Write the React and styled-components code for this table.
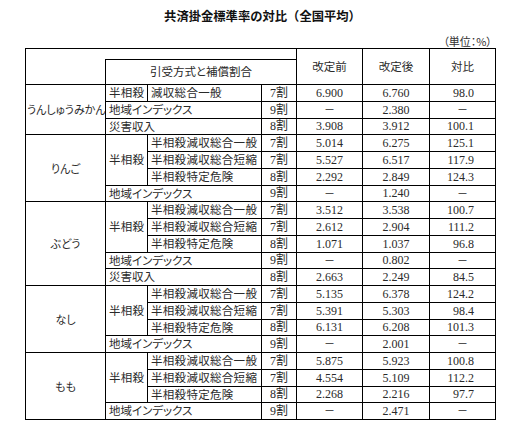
import React from "react";
import styled, { createGlobalStyle } from "styled-components";

const Global = createGlobalStyle`
  html, body { margin: 0; padding: 0; background: #fff; }
  body { width: 523px; height: 428px; overflow: hidden; }
`;

const JP = `"Noto Sans CJK JP", "Noto Sans", sans-serif`;
const NUM = `"Liberation Serif", "Noto Sans CJK JP", serif`;

const Page = styled.div`
  width: 523px;
  display: flex;
  flex-direction: column;
  align-items: center;
  padding-top: 6px;
  color: #1c1c1c;
`;

const Title = styled.h1`
  margin: 0;
  font-family: ${JP};
  font-size: 12.3px;
  font-weight: 700;
  line-height: 20px;
  height: 20px;
  padding-left: 2px;
  color: #111;
`;

const Unit = styled.div`
  align-self: stretch;
  margin-top: 8px;
  padding-right: 31px;
  text-align: right;
  font-family: ${JP};
  font-size: 11px;
  line-height: 14px;
  height: 14px;
  font-feature-settings: "palt";
  color: #333;
`;

const Table = styled.table`
  width: 470px;
  margin-left: 25px;
  align-self: flex-start;
  table-layout: fixed;
  border-collapse: collapse;
  border: 1px solid #000;
  font-family: ${JP};
  font-size: 11.5px;
  color: #2a2a2a;
  font-feature-settings: "palt";
`;

const HeadRow = styled.tr`
  height: ${(p) => p.$h}px;
`;

const Row = styled.tr`
  height: 16.75px;
`;

const Head = styled.th`
  font-weight: 400;
  padding: 0;
  line-height: 1;
  text-align: center;
  vertical-align: middle;
  border: 1px solid #000;
  ${(p) => p.$blank && `border-right: none; border-bottom: none;`}
  ${(p) => p.$topGap && `border-left: none; border-right: 1px solid #000;`}
`;

const Cell = styled.td`
  padding: 0 ${(p) => (p.$padR ? p.$padR : 3)}px 0 3px;
  line-height: 1;
  white-space: nowrap;
  overflow: hidden;
  vertical-align: middle;
  text-align: ${(p) => p.$align || "left"};
  border: 1px solid #000;
  font-family: ${(p) => (p.$num ? NUM : JP)};
  font-size: ${(p) => (p.$num ? "12px" : "11.5px")};
  letter-spacing: ${(p) => (p.$wide ? "0.3px" : "0")};
`;

const Label = styled(Cell)`
  text-align: center;
  padding: 0 1px;
  font-size: 11px;
`;

const Dash = styled.span`
  font-family: ${JP};
  font-size: 11px;
`;

const groups = [
  {
    name: "うんしゅうみかん",
    rows: [
      { kind: "inline", item: "減収総合一般", rate: "7割", a: "6.900", b: "6.760", c: "98.0" },
      { kind: "wide", item: "地域インデックス", rate: "9割", a: "—", b: "2.380", c: "—" },
      { kind: "wide", item: "災害収入", rate: "8割", a: "3.908", b: "3.912", c: "100.1" },
    ],
  },
  {
    name: "りんご",
    rows: [
      { kind: "sub", item: "半相殺減収総合一般", rate: "7割", a: "5.014", b: "6.275", c: "125.1" },
      { kind: "sub", item: "半相殺減収総合短縮", rate: "7割", a: "5.527", b: "6.517", c: "117.9" },
      { kind: "sub", item: "半相殺特定危険", rate: "8割", a: "2.292", b: "2.849", c: "124.3" },
      { kind: "wide", item: "地域インデックス", rate: "9割", a: "—", b: "1.240", c: "—" },
    ],
  },
  {
    name: "ぶどう",
    rows: [
      { kind: "sub", item: "半相殺減収総合一般", rate: "7割", a: "3.512", b: "3.538", c: "100.7" },
      { kind: "sub", item: "半相殺減収総合短縮", rate: "7割", a: "2.612", b: "2.904", c: "111.2" },
      { kind: "sub", item: "半相殺特定危険", rate: "8割", a: "1.071", b: "1.037", c: "96.8" },
      { kind: "wide", item: "地域インデックス", rate: "9割", a: "—", b: "0.802", c: "—" },
      { kind: "wide", item: "災害収入", rate: "8割", a: "2.663", b: "2.249", c: "84.5" },
    ],
  },
  {
    name: "なし",
    rows: [
      { kind: "sub", item: "半相殺減収総合一般", rate: "7割", a: "5.135", b: "6.378", c: "124.2" },
      { kind: "sub", item: "半相殺減収総合短縮", rate: "7割", a: "5.391", b: "5.303", c: "98.4" },
      { kind: "sub", item: "半相殺特定危険", rate: "8割", a: "6.131", b: "6.208", c: "101.3" },
      { kind: "wide", item: "地域インデックス", rate: "9割", a: "—", b: "2.001", c: "—" },
    ],
  },
  {
    name: "もも",
    rows: [
      { kind: "sub", item: "半相殺減収総合一般", rate: "7割", a: "5.875", b: "5.923", c: "100.8" },
      { kind: "sub", item: "半相殺減収総合短縮", rate: "7割", a: "4.554", b: "5.109", c: "112.2" },
      { kind: "sub", item: "半相殺特定危険", rate: "8割", a: "2.268", b: "2.216", c: "97.7" },
      { kind: "wide", item: "地域インデックス", rate: "9割", a: "—", b: "2.471", c: "—" },
    ],
  },
];

const Value = ({ v, right }) =>
  v === "—" ? (
    <Cell $align="center">
      <Dash>－</Dash>
    </Cell>
  ) : (
    <Cell $num $align={right ? "right" : "center"} $padR={right ? 21 : 3}>
      {v}
    </Cell>
  );

function GroupRows({ g }) {
  const subCount = g.rows.filter((r) => r.kind === "sub").length;
  let subStarted = false;
  return g.rows.map((r, i) => {
    let itemCells;
    if (r.kind === "inline") {
      itemCells = (
        <>
          <Cell $wide>半相殺</Cell>
          <Cell $wide>{r.item}</Cell>
        </>
      );
    } else if (r.kind === "wide") {
      itemCells = <Cell colSpan={2}>{r.item}</Cell>;
    } else {
      const first = !subStarted;
      subStarted = true;
      itemCells = (
        <>
          {first && (
            <Cell rowSpan={subCount} $align="center" $wide>
              半相殺
            </Cell>
          )}
          <Cell $wide>{r.item}</Cell>
        </>
      );
    }
    return (
      <Row key={i}>
        {i === 0 && <Label rowSpan={g.rows.length}>{g.name}</Label>}
        {itemCells}
        <Cell $num $align="center">{r.rate}</Cell>
        <Value v={r.a} />
        <Value v={r.b} />
        <Value v={r.c} right />
      </Row>
    );
  });
}

export default function App() {
  return (
    <>
      <Global />
      <Page>
        <Title>共済掛金標準率の対比（全国平均）</Title>
        <Unit>（単位：%）</Unit>
        <Table>
          <colgroup>
            <col style={{ width: 80 }} />
            <col style={{ width: 42 }} />
            <col style={{ width: 114 }} />
            <col style={{ width: 35 }} />
            <col style={{ width: 66 }} />
            <col style={{ width: 67 }} />
            <col style={{ width: 66 }} />
          </colgroup>
          <thead>
            <HeadRow $h={11}>
              <Head rowSpan={2} $blank />
              <Head colSpan={3} $topGap />
              <Head rowSpan={2}>改定前</Head>
              <Head rowSpan={2}>改定後</Head>
              <Head rowSpan={2}>対比</Head>
            </HeadRow>
            <HeadRow $h={25}>
              <Head colSpan={3}>引受方式と補償割合</Head>
            </HeadRow>
          </thead>
          <tbody>
            {groups.map((g) => (
              <GroupRows key={g.name} g={g} />
            ))}
          </tbody>
        </Table>
      </Page>
    </>
  );
}
